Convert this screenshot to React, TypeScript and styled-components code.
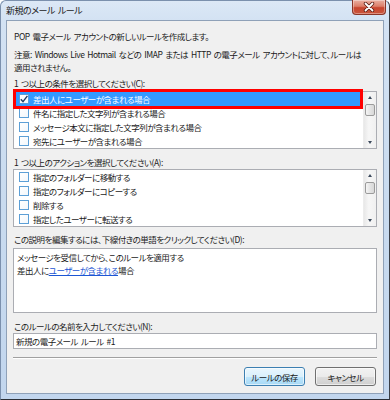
import React from 'react'
import styled, { createGlobalStyle } from 'styled-components'

const GlobalStyle = createGlobalStyle`
  html, body {
    margin: 0;
    padding: 0;
    background: #ffffff;
  }
  body {
    font-family: "Noto Sans CJK JP", "Open Sans", sans-serif;
    font-size: 8.5px;
    letter-spacing: -0.5px;
    word-spacing: 1.5px;
    font-feature-settings: "palt";
    color: #1a1a1a;
  }
`

const conditions = [
  '差出人にユーザーが含まれる場合',
  '件名に指定した文字列が含まれる場合',
  'メッセージ本文に指定した文字列が含まれる場合',
  '宛先にユーザーが含まれる場合',
]

const actions = [
  '指定のフォルダーに移動する',
  '指定のフォルダーにコピーする',
  '削除する',
  '指定したユーザーに転送する',
]

const CheckBox = ({ checked }: { checked?: boolean }) => (
  <Box>
    {checked && (
      <svg width="10" height="10" viewBox="0 0 10 10">
        <path d="M1.8 5.2 L4 7.6 L8.4 1.8" fill="none" stroke="#233d63" strokeWidth="1.4" />
      </svg>
    )}
  </Box>
)

const ScrollBar = () => (
  <Track>
    <Arrow>
      <UpGlyph />
    </Arrow>
    <Thumb />
    <Spacer />
    <Arrow>
      <DownGlyph />
    </Arrow>
  </Track>
)

const RuleList = (props: { items: string[]; selected?: number; highlight?: boolean }) => (
  <ListWrap>
    <ListBox>
      <Items>
        {props.items.map((t, idx) => (
          <Row key={idx} $selected={idx === props.selected}>
            <CheckBox checked={idx === props.selected} />
            <span>{t}</span>
          </Row>
        ))}
      </Items>
      <ScrollBar />
    </ListBox>
    {props.highlight && <RedMark />}
  </ListWrap>
)

const App = () => {
  return (
    <>
      <GlobalStyle />
      <Window>
        <TitleBar>
          <Title>新規のメール ルール</Title>
          <CloseButton>
            <svg width="14" height="10" viewBox="0 0 14 10">
              <path d="M3.5 1.5 L10.5 8.5 M10.5 1.5 L3.5 8.5" stroke="#5a1d14" strokeWidth="3.4" strokeLinecap="round" />
              <path d="M3.5 1.5 L10.5 8.5 M10.5 1.5 L3.5 8.5" stroke="#ffffff" strokeWidth="1.8" strokeLinecap="round" />
            </svg>
          </CloseButton>
        </TitleBar>
        <Client>
          <Label $mt={0}>POP 電子メール アカウントの新しいルールを作成します。</Label>
          <Note>
            注意: Windows Live Hotmail などの IMAP または HTTP の電子メール アカウントに対して、ルールは
            <br />
            適用されません。
          </Note>
          <Label $mt={3}>1 つ以上の条件を選択してください(C):</Label>
          <Gap $h={2} />
          <RuleList items={conditions} selected={0} highlight />
          <Label $mt={7}>1 つ以上のアクションを選択してください(A):</Label>
          <Gap $h={1} />
          <RuleList items={actions} />
          <Label $mt={6}>この説明を編集するには、下線付きの単語をクリックしてください(D):</Label>
          <Description>
            <div>メッセージを受信してから、このルールを適用する</div>
            <div>
              差出人に<RuleLink>ユーザーが含まれる</RuleLink>場合
            </div>
          </Description>
          <Label $mt={7}>このルールの名前を入力してください(N):</Label>
          <NameInput>新規の電子メール ルール #1</NameInput>
          <Separator />
          <ButtonRow>
            <DialogButton $primary>ルールの保存</DialogButton>
            <DialogButton>キャンセル</DialogButton>
          </ButtonRow>
        </Client>
      </Window>
    </>
  )
}

export default App

const Window = styled.div`
  width: 390px;
  height: 400px;
  box-sizing: border-box;
  display: flex;
  flex-direction: column;
  padding: 0 5px 5px 5px;
  border: 1px solid #7b90ad;
  border-right-color: #3a3f47;
  border-bottom-color: #2b2f36;
  border-radius: 6px 6px 0 0;
  background: linear-gradient(to bottom, #dce8f6 0px, #d3e2f3 20px, #c9dbef 200px, #c2d6ee 100%);
`

const TitleBar = styled.div`
  height: 19px;
  display: flex;
  justify-content: space-between;
  align-items: flex-start;
`

const Title = styled.div`
  font-size: 9px;
  line-height: 19px;
  color: #1b1b1b;
`

const CloseButton = styled.div`
  width: 34px;
  height: 15px;
  box-sizing: border-box;
  margin-top: -1px;
  margin-right: -2px;
  display: flex;
  align-items: center;
  justify-content: center;
  border: 1px solid #8a3527;
  border-top: none;
  border-radius: 0 0 4px 4px;
  background: linear-gradient(to bottom, #eab0a2 0%, #dc7e69 45%, #c8452f 55%, #c9553c 100%);
  box-shadow: inset 0 0 0 1px rgba(255, 255, 255, 0.35);
`

const Client = styled.div`
  flex: 1;
  display: flex;
  flex-direction: column;
  background: #f0f0f0;
  border: 1px solid #8fa1b8;
  padding: 9px 6px 7px 6px;
`

const Label = styled.div<{ $mt: number }>`
  margin-top: ${(p) => p.$mt}px;
  line-height: 12px;
  padding-left: 1px;
  white-space: nowrap;
`

const Note = styled.div`
  margin-top: 6px;
  line-height: 13px;
  padding-left: 1px;
  white-space: nowrap;
`

const Gap = styled.div<{ $h: number }>`
  height: ${(p) => p.$h}px;
`

const ListWrap = styled.div`
  position: relative;
`

const ListBox = styled.div`
  height: 58px;
  box-sizing: border-box;
  display: flex;
  border: 1px solid #abadb3;
  background: #ffffff;
`

const Items = styled.div`
  flex: 1;
  display: flex;
  flex-direction: column;
`

const Row = styled.div<{ $selected?: boolean }>`
  height: 14px;
  display: flex;
  align-items: center;
  gap: 4px;
  padding-left: 5px;
  white-space: nowrap;
  background: ${(p) => (p.$selected ? '#3399ff' : 'transparent')};
  color: ${(p) => (p.$selected ? '#ffffff' : '#1a1a1a')};
`

const Box = styled.div`
  width: 10px;
  height: 10px;
  box-sizing: border-box;
  flex-shrink: 0;
  border: 1px solid #5c9fd6;
  background: linear-gradient(135deg, #ffffff 0%, #f3f7fb 100%);
  display: flex;
  align-items: center;
  justify-content: center;
  svg {
    display: block;
    margin: -1px;
  }
`

const RedMark = styled.div`
  position: absolute;
  left: 0;
  top: -2px;
  width: 350px;
  height: 20px;
  box-sizing: border-box;
  border: 3px solid #ff0000;
  pointer-events: none;
`

const Track = styled.div`
  width: 12px;
  display: flex;
  flex-direction: column;
  background: linear-gradient(to right, #e8e8e8, #f6f6f6 40%, #f0f0f0);
  border-left: 1px solid #ececec;
`

const Arrow = styled.div`
  height: 11px;
  display: flex;
  align-items: center;
  justify-content: center;
`

const UpGlyph = styled.div`
  width: 0;
  height: 0;
  border-left: 2.5px solid transparent;
  border-right: 2.5px solid transparent;
  border-bottom: 3px solid #3c4a5c;
`

const DownGlyph = styled.div`
  width: 0;
  height: 0;
  border-left: 2.5px solid transparent;
  border-right: 2.5px solid transparent;
  border-top: 3px solid #3c4a5c;
`

const Thumb = styled.div`
  height: 12px;
  margin: 1px 1px 0 1px;
  box-sizing: border-box;
  border: 1px solid #9b9b9b;
  border-radius: 2px;
  background: linear-gradient(to right, #f5f5f5, #e4e4e4 50%, #d8d8d8);
`

const Spacer = styled.div`
  flex: 1;
`

const Description = styled.div`
  margin-top: 3px;
  height: 65px;
  box-sizing: border-box;
  border: 1px solid #abadb3;
  background: #ffffff;
  padding: 2px 3px;
  line-height: 13px;
`

const RuleLink = styled.span`
  color: #1c56d4;
  text-decoration: underline;
`

const NameInput = styled.div`
  margin-top: 1px;
  height: 16px;
  box-sizing: border-box;
  border: 1px solid #abadb3;
  background: #ffffff;
  padding-left: 2px;
  line-height: 14px;
`

const Separator = styled.div`
  margin-top: 8px;
  border-top: 1px solid #a0a0a0;
  border-bottom: 1px solid #ffffff;
`

const ButtonRow = styled.div`
  margin-top: 8px;
  display: flex;
  justify-content: flex-end;
  gap: 10px;
  padding-right: 1px;
`

const DialogButton = styled.div<{ $primary?: boolean }>`
  width: 61px;
  height: 19px;
  box-sizing: border-box;
  display: flex;
  align-items: center;
  justify-content: center;
  border-radius: 3px;
  border: 1px solid ${(p) => (p.$primary ? '#3c7fb1' : '#707070')};
  background: ${(p) =>
    p.$primary
      ? 'linear-gradient(to bottom, #eaf6fd 0%, #d9f0fc 50%, #bee6fd 51%, #a7d9f5 100%)'
      : 'linear-gradient(to bottom, #f2f2f2 0%, #ebebeb 50%, #dddddd 51%, #cfcfcf 100%)'};
  box-shadow: inset 0 0 0 1px rgba(255, 255, 255, 0.6);
  color: #1a1a1a;
`
